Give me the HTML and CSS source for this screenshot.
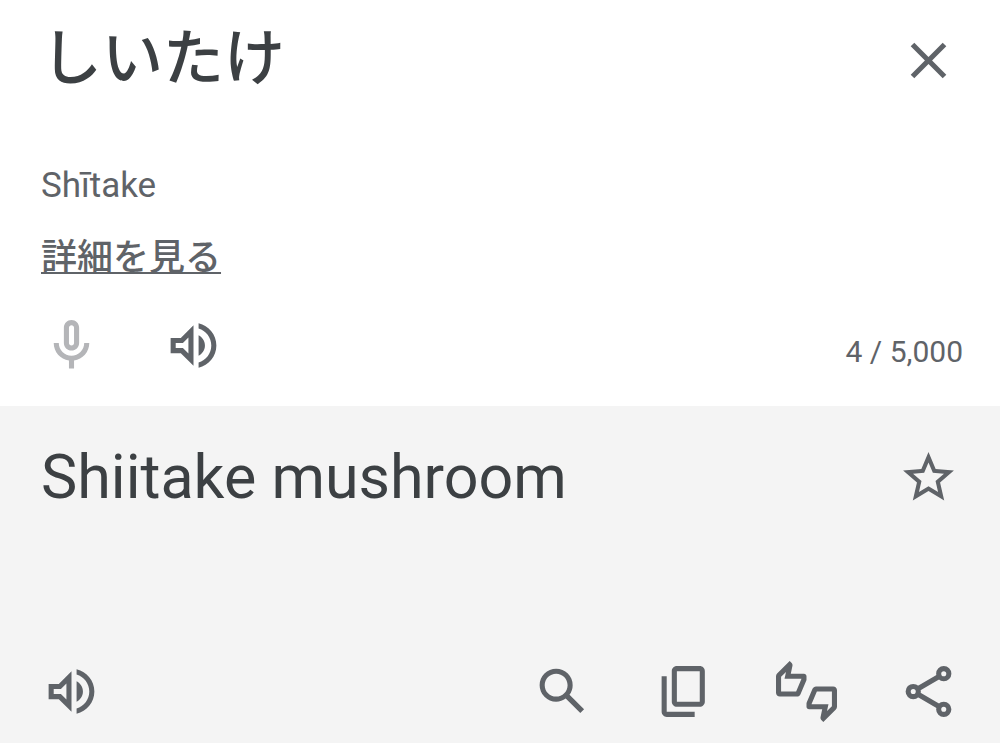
FILE: index.html
```html
<!DOCTYPE html>
<html lang="ja">
<head>
    <meta charset="UTF-8">
    <meta name="viewport" content="width=device-width, initial-scale=1.0">
    <title>翻訳</title>
    <link rel="stylesheet" href="styles.css">
</head>
<body>
    <main class="translator">
        <section class="panel source">
            <div class="text-row">
                <textarea class="source-text" rows="1" maxlength="5000" aria-label="原文" spellcheck="false">しいたけ</textarea>
                <button class="icon-btn" type="button" aria-label="原文を消去">
                    <svg viewBox="0 0 24 24"><path d="M19 6.41L17.59 5 12 10.59 6.41 5 5 6.41 10.59 12 5 17.59 6.41 19 12 13.41 17.59 19 19 17.59 13.41 12z"/></svg>
                </button>
            </div>

            <p class="romaji">Shītake</p>
            <a class="details-link" href="#">詳細を見る</a>

            <div class="toolbar">
                <div class="actions">
                    <button class="icon-btn" type="button" aria-label="音声入力" disabled>
                        <svg viewBox="0 0 24 24"><path d="M12 14c1.66 0 3-1.34 3-3V5c0-1.66-1.34-3-3-3S9 3.34 9 5v6c0 1.66 1.34 3 3 3zm-1-9c0-.55.45-1 1-1s1 .45 1 1v6c0 .55-.45 1-1 1s-1-.45-1-1V5zm6 6c0 2.76-2.24 5-5 5s-5-2.24-5-5H5c0 3.53 2.61 6.43 6 6.92V21h2v-3.08c3.39-.49 6-3.39 6-6.92h-2z"/></svg>
                    </button>
                    <button class="icon-btn" type="button" aria-label="原文を聞く">
                        <svg viewBox="0 0 24 24"><path d="M3 9v6h4l5 5V4L7 9H3zm7-.17v6.34L7.83 13H5v-2h2.83L10 8.83zM16.5 12c0-1.77-1.02-3.29-2.5-4.03v8.05c1.48-.73 2.5-2.25 2.5-4.02zM14 3.23v2.06c2.89.86 5 3.54 5 6.71s-2.11 5.85-5 6.71v2.06c4.01-.91 7-4.49 7-8.77s-2.99-7.86-7-8.77z"/></svg>
                    </button>
                </div>
                <span class="counter">4 / 5,000</span>
            </div>
        </section>

        <section class="panel result">
            <div class="text-row">
                <p class="result-text" lang="en">Shiitake mushroom</p>
                <button class="icon-btn" type="button" aria-label="翻訳を保存">
                    <svg viewBox="0 0 24 24"><path d="M22 9.24l-7.19-.62L12 2 9.19 8.63 2 9.24l5.46 4.73L5.82 21 12 17.27 18.18 21l-1.63-7.03L22 9.24zM12 15.4l-3.76 2.27 1-4.28-3.32-2.88 4.38-.38L12 6.1l1.71 4.04 4.38.38-3.32 2.88 1 4.28L12 15.4z"/></svg>
                </button>
            </div>

            <div class="toolbar">
                <button class="icon-btn" type="button" aria-label="翻訳を聞く">
                    <svg viewBox="0 0 24 24"><path d="M3 9v6h4l5 5V4L7 9H3zm7-.17v6.34L7.83 13H5v-2h2.83L10 8.83zM16.5 12c0-1.77-1.02-3.29-2.5-4.03v8.05c1.48-.73 2.5-2.25 2.5-4.02zM14 3.23v2.06c2.89.86 5 3.54 5 6.71s-2.11 5.85-5 6.71v2.06c4.01-.91 7-4.49 7-8.77s-2.99-7.86-7-8.77z"/></svg>
                </button>
                <div class="actions">
                    <button class="icon-btn" type="button" aria-label="検索">
                        <svg viewBox="0 0 24 24"><path d="M20.49 19l-5.73-5.73C15.53 12.2 16 10.91 16 9.5A6.5 6.5 0 1 0 9.5 16c1.41 0 2.7-.47 3.77-1.24L19 20.49 20.49 19zM5 9.5C5 7.01 7.01 5 9.5 5S14 7.01 14 9.5 11.99 14 9.5 14 5 11.99 5 9.5z"/></svg>
                    </button>
                    <button class="icon-btn" type="button" aria-label="翻訳をコピー">
                        <svg viewBox="0 0 24 24"><path d="M18 2H9c-1.1 0-2 .9-2 2v12c0 1.1.9 2 2 2h9c1.1 0 2-.9 2-2V4c0-1.1-.9-2-2-2zm0 14H9V4h9v12zM3 6v14c0 1.1.9 2 2 2h11v-2H5V6H3z"/></svg>
                    </button>
                    <button class="icon-btn" type="button" aria-label="翻訳を評価">
                        <svg viewBox="0 0 24 24"><path d="M12 6c0-.55-.45-1-1-1H5.82l.66-3.18.02-.23c0-.31-.13-.59-.33-.8L5.38 0 .44 4.94C.17 5.21 0 5.59 0 6v6.5c0 .83.67 1.5 1.5 1.5h6.75c.62 0 1.15-.38 1.38-.91l2.26-5.29c.07-.17.11-.36.11-.55V6zm-2 1.13L7.92 12H2V6.21l1.93-1.93L3.36 7H10v.13zM22.5 10h-6.75c-.62 0-1.15.38-1.38.91l-2.26 5.29c-.07.17-.11.36-.11.55V18c0 .55.45 1 1 1h5.18l-.66 3.18-.02.24c0 .31.13.59.33.8l.79.78 4.94-4.94c.27-.27.44-.65.44-1.06v-6.5c0-.83-.67-1.5-1.5-1.5zm-.5 7.79l-1.93 1.93.57-2.72H14v-.13L16.08 12H22v5.79z"/></svg>
                    </button>
                    <button class="icon-btn" type="button" aria-label="翻訳を共有">
                        <svg class="line-icon" viewBox="0 0 24 24">
                            <path d="M7.7 11l8.6-5M7.7 13l8.6 5"/>
                            <circle cx="18" cy="5" r="2"/>
                            <circle cx="6" cy="12" r="2"/>
                            <circle cx="18" cy="19" r="2"/>
                        </svg>
                    </button>
                </div>
            </div>
        </section>
    </main>
</body>
</html>
```
FILE: styles.css
```css
* {
    margin: 0;
    padding: 0;
    box-sizing: border-box;
}

body {
    background-color: #f4f4f4;
    color: #5f6368;
    font-family: Roboto, "Noto Sans CJK JP", sans-serif;
}

.translator {
    display: flex;
    flex-direction: column;
    min-height: 100vh;
}

.panel {
    display: flex;
    flex-direction: column;
    padding: 0 41px;
}

.source {
    background-color: #fff;
    padding-top: 16px;
    padding-bottom: 30px;
}

.result {
    flex: 1;
    padding-top: 31px;
    padding-bottom: 21px;
}

.text-row {
    display: flex;
    align-items: center;
    justify-content: space-between;
    gap: 40px;
}

.source-text,
.result-text {
    flex: 1;
    min-width: 0;
    color: #3c4043;
    font-family: inherit;
    font-size: 61px;
    line-height: 80px;
}

.source-text {
    display: block;
    height: 88px;
    padding-top: 3px;
    border: none;
    outline: none;
    background: transparent;
    resize: none;
    overflow: hidden;
    font-weight: 500;
}

.romaji {
    margin-top: 60px;
    font-size: 35px;
    line-height: 44px;
}

.details-link {
    align-self: flex-start;
    margin-top: 26px;
    color: inherit;
    font-size: 36px;
    font-weight: 500;
    line-height: 48px;
    text-decoration: underline;
    text-decoration-thickness: 2px;
    text-decoration-skip-ink: none;
    text-underline-offset: 2px;
}

.toolbar {
    display: flex;
    align-items: center;
    justify-content: space-between;
    margin-top: 33px;
}

.result .toolbar {
    margin-top: auto;
}

.actions {
    display: flex;
    gap: 61px;
}

.icon-btn {
    flex: none;
    width: 61px;
    height: 61px;
    border: none;
    background: transparent;
    color: inherit;
    cursor: pointer;
}

.icon-btn:disabled {
    color: #b4b5b8;
    cursor: default;
}

.icon-btn svg {
    display: block;
    width: 100%;
    height: 100%;
    fill: currentColor;
}

.icon-btn .line-icon {
    fill: none;
    stroke: currentColor;
    stroke-width: 2;
}

.counter {
    margin-right: -4px;
    padding-top: 13px;
    font-size: 30px;
    line-height: 36px;
}
```
